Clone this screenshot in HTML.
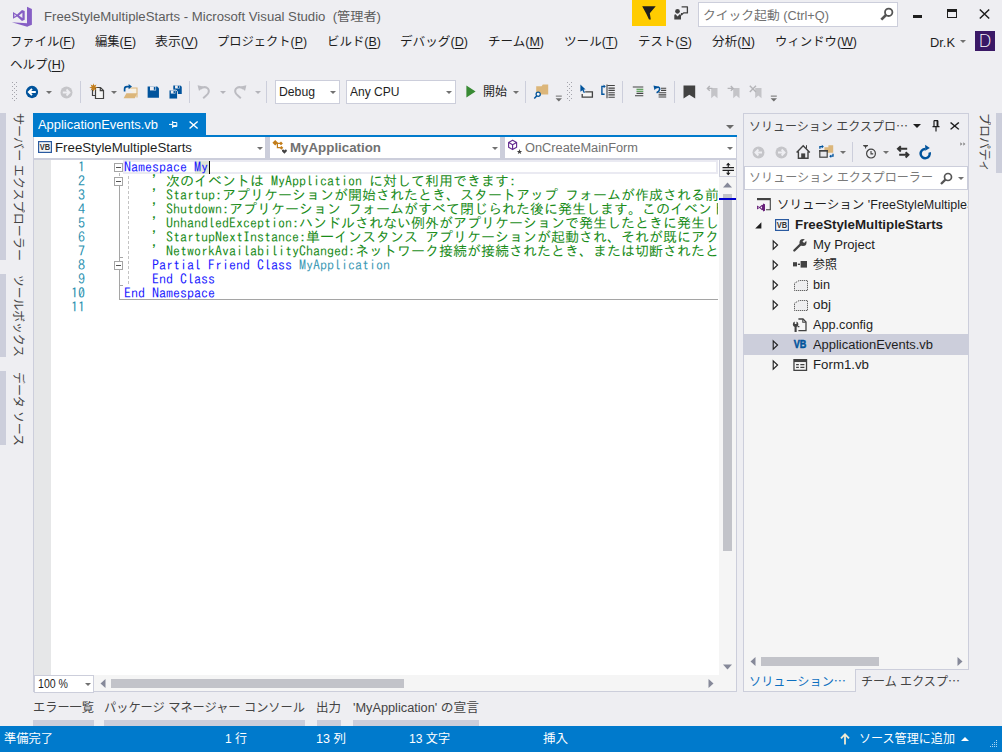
<!DOCTYPE html>
<html lang="ja"><head>
<meta charset="utf-8">
<title>FreeStyleMultipleStarts - Microsoft Visual Studio</title>
<style>
*{box-sizing:border-box;margin:0;padding:0}
html,body{width:1002px;height:752px;overflow:hidden;background:#eeeef2}
body{position:relative;font-family:"Liberation Sans","Noto Sans CJK JP",sans-serif;font-size:12px;color:#1e1e1e}
.a{position:absolute;white-space:nowrap}
svg{position:absolute;overflow:visible}
.t{position:absolute;white-space:nowrap;line-height:20px;height:20px;transform-origin:0 50%}
u{text-decoration:underline;text-underline-offset:2px;text-decoration-thickness:1px}
#title{left:44px;top:7px;font-size:12px;color:#5c5c5c}
.m{font-size:12px;color:#1e1e1e;top:32px}
.code{font-family:"IPAGothic","Liberation Mono",monospace;font-size:14px;line-height:14px;height:14px;position:absolute;white-space:pre;left:5px}
.ln{font-family:"IPAGothic","Liberation Mono",monospace;font-size:14px;line-height:14px;height:14px;position:absolute;width:52px;left:33px;text-align:right;color:#2b91af}
.k{color:#1c1cff}.c{color:#1a8c1a}.ty{color:#3f9bb6}
.se{font-size:12px;color:#1e1e1e}
.sb{color:#fff;font-size:12px;top:729px}
.vt{position:absolute;writing-mode:vertical-rl;text-orientation:sideways;font-size:12px;color:#444;white-space:nowrap;line-height:14px;width:14px;transform-origin:50% 0}
.bar{position:absolute;background:#cccedb}
.dd{position:absolute;width:0;height:0;border-left:3.5px solid transparent;border-right:3.5px solid transparent;border-top:3.5px solid #717171}
.sep{position:absolute;width:1px;background:#cccedb}
.bt{font-size:12px;color:#444;top:698px}
</style>
</head>
<body>
<!-- ===== TITLE BAR ===== -->
<svg style="left:12px;top:7px" width="21" height="20" viewBox="0 0 21 20">
  <path d="M15 -0.2 L19.9 1.9 V17.7 L15 19.8 Z" fill="#865fc5"></path>
  <path d="M-0.2 15.2 L15.2 16.3 V19.8 Z" fill="#865fc5"></path>
  <path d="M1 5 L5.1 7.4 L10 2.9 L12.7 4.1 V12.7 L10 13.9 L5.1 9.4 L1 11.8 Z M2.4 7.1 V9.7 L4.1 8.4 Z M6.9 8.4 L10.4 5.7 V11.1 Z" fill="#865fc5" fill-rule="evenodd"></path>
</svg>
<div class="t" id="title" style="transform: scaleX(1.097);">FreeStyleMultipleStarts - Microsoft Visual Studio &nbsp;(管理者)</div>

<div class="a" style="left:632px;top:0;width:34px;height:26px;background:#ffcc00"></div>
<svg style="left:642px;top:6px" width="15" height="15" viewBox="0 0 15 15"><path d="M0.2 0.3 H13.7 L7.8 7.2 L8.8 13.6 H7 L4.3 7.8 Z" fill="#1e1e1e"></path></svg>
<svg style="left:673px;top:5px" width="17" height="16" viewBox="0 0 17 16">
  <path d="M8.6 1.9 H14.4 V7.9 H10.6 L8.6 9.9 V7.9" fill="#eeeef2" stroke="#424242" stroke-width="1.3" stroke-linejoin="round"></path>
  <circle cx="4.5" cy="6.3" r="2.35" fill="#424242"></circle>
  <path d="M1.3 14.6 V10.6 Q1.3 9.3 2.6 9.3 L4.6 11.6 L6.6 9.3 Q8 9.3 8 10.6 V14.6 Z" fill="#424242"></path>
</svg>
<div class="a" style="left:698px;top:2px;width:200px;height:24.5px;background:#fff;border:1px solid #cccedb"></div>
<div class="t" style="left: 703px; top: 6px; font-size: 12px; color: rgb(113, 113, 113); transform: scaleX(1.0647);">クイック起動 (Ctrl+Q)</div>
<svg style="left:880px;top:7px" width="14" height="14" viewBox="0 0 14 14"><circle cx="8.7" cy="5.3" r="3.7" fill="none" stroke="#555" stroke-width="1.8"></circle><path d="M6 8 L1.3 12.7" stroke="#555" stroke-width="2.6"></path></svg>
<div class="a" style="left:913px;top:15px;width:9px;height:3px;background:#1e1e1e"></div>
<div class="a" style="left:947px;top:9px;width:10px;height:9px;border:1px solid #1e1e1e;border-top-width:3px"></div>
<svg style="left:979px;top:9px" width="11" height="10" viewBox="0 0 11 10"><path d="M0.8 0.5 L10.2 9.5 M10.2 0.5 L0.8 9.5" stroke="#1e1e1e" stroke-width="1.5"></path></svg>

<!-- ===== MENU ===== -->
<div class="t m" style="left: 10px; transform: scaleX(1.0261);">ファイル(<u>F</u>)</div>
<div class="t m" style="left: 95px; transform: scaleX(1.0246);">編集(<u>E</u>)</div>
<div class="t m" style="left: 155px; transform: scaleX(1.0746);">表示(<u>V</u>)</div>
<div class="t m" style="left: 217px; transform: scaleX(1.0225);">プロジェクト(<u>P</u>)</div>
<div class="t m" style="left: 327px; transform: scaleX(1.0381);">ビルド(<u>B</u>)</div>
<div class="t m" style="left: 400px; transform: scaleX(1.0515);">デバッグ(<u>D</u>)</div>
<div class="t m" style="left: 488px; transform: scaleX(1.044);">チーム(<u>M</u>)</div>
<div class="t m" style="left: 564px; transform: scaleX(1.0517);">ツール(<u>T</u>)</div>
<div class="t m" style="left: 638px; transform: scaleX(1.0381);">テスト(<u>S</u>)</div>
<div class="t m" style="left: 712px; transform: scaleX(1.0572);">分析(<u>N</u>)</div>
<div class="t m" style="left: 775px; transform: scaleX(1.0337);">ウィンドウ(<u>W</u>)</div>
<div class="t m" style="left: 10px; top: 55px; transform: scaleX(1.0442);">ヘルプ(<u>H</u>)</div>
<div class="t" style="left: 930px; top: 33px; font-size: 12px; color: rgb(30, 30, 30); transform: scaleX(1.071);">Dr.K</div>
<div class="dd" style="left:960px;top:40px"></div>
<div class="a" style="left:975px;top:31px;width:20px;height:20px;background:#3a1866;color:#fff;font-family:'DejaVu Sans','Liberation Sans',sans-serif;font-weight:200;font-size:17px;line-height:20px;text-align:center">D</div>
<!-- ===== TOOLBAR ===== -->
<svg style="left:12px;top:82px" width="5" height="19" viewBox="0 0 5 19"><defs><pattern id="gp" width="4" height="4" patternUnits="userSpaceOnUse"><rect x="0" y="0" width="1" height="1" fill="#a4a4ac"></rect><rect x="2" y="2" width="1" height="1" fill="#a4a4ac"></rect></pattern></defs><rect width="5" height="19" fill="url(#gp)"></rect></svg>
<!-- back -->
<svg style="left:25px;top:85px" width="14" height="14" viewBox="0 0 14 14"><circle cx="7" cy="7" r="6.15" fill="#00539c"></circle><path d="M10.8 7 H4.2 M7 3.8 L3.8 7 L7 10.2" fill="none" stroke="#fff" stroke-width="1.9"></path></svg>
<div class="dd" style="left:45.5px;top:90.5px"></div>
<svg style="left:60px;top:85.5px" width="13" height="13" viewBox="0 0 13 13"><circle cx="6.5" cy="6.5" r="6" fill="#c5c5c9"></circle><path d="M2.8 6.5 H9.2 M6.5 3.5 L9.5 6.5 L6.5 9.5" fill="none" stroke="#eeeef2" stroke-width="1.8"></path></svg>
<div class="sep" style="left:80px;top:81px;height:22px"></div>
<!-- new project -->
<svg style="left:89px;top:83px" width="16" height="17" viewBox="0 0 16 17">
  <path d="M6.5 4.5 H11.5 L14.5 7.5 V15.5 H6.5 Z M11.3 4.7 V7.7 H14.3" fill="#f5f5f5" stroke="#424242" stroke-width="1.2"></path>
  <path d="M3.5 6.5 V12.5 H6" fill="none" stroke="#424242" stroke-width="1.2"></path>
  <path d="M4.5 0.2 L5.2 2.6 L7.4 1.4 L6.3 3.7 L8.8 4.5 L6.3 5.3 L7.4 7.6 L5.2 6.4 L4.5 8.8 L3.8 6.4 L1.6 7.6 L2.7 5.3 L0.2 4.5 L2.7 3.7 L1.6 1.4 L3.8 2.6 Z" fill="#c27d1a"></path>
</svg>
<div class="dd" style="left:110.5px;top:90.5px"></div>
<!-- open -->
<svg style="left:123px;top:83px" width="16" height="17" viewBox="0 0 16 17">
  <path d="M5.8 5 H14 V14.5" fill="#f7f1e4" stroke="#dcb67a" stroke-width="1.1"></path>
  <path d="M0.6 15.2 L3.4 10.2 H14.4 L11.8 15.2 Z" fill="#dcb67a"></path>
  <path d="M1.6 8.4 V6 Q1.6 3.6 4 3.6 H6.4" fill="none" stroke="#00539c" stroke-width="1.7"></path>
  <path d="M5.6 1 L9 3.6 L5.6 6.2 Z" fill="#00539c"></path>
</svg>
<!-- save -->
<svg style="left:146.7px;top:85.6px" width="12.6" height="12.2" viewBox="0 0 14 14"><path d="M0.5 0.5 H11.5 L13.5 2.5 V13.5 H0.5 Z" fill="#00539c"></path><rect x="3.2" y="0.5" width="7" height="4.6" fill="#eeeef2"></rect><rect x="7.6" y="1.2" width="1.9" height="3.2" fill="#00539c"></rect></svg>
<!-- save all -->
<svg style="left:167.6px;top:84.6px" width="14.8" height="14.4" viewBox="0 0 16 17">
  <path d="M5.5 0.5 H13.8 L15.5 2.2 V10.5 H5.5 Z" fill="#00539c"></path><rect x="7.6" y="0.5" width="5.4" height="3.6" fill="#eeeef2"></rect><rect x="10.8" y="1" width="1.6" height="2.6" fill="#00539c"></rect>
  <path d="M0.5 6 H8.8 L10.5 7.7 V16.5 H0.5 Z" fill="#00539c" stroke="#eeeef2" stroke-width="1"></path><rect x="2.6" y="6.5" width="5.4" height="3.6" fill="#eeeef2"></rect><rect x="5.8" y="7" width="1.6" height="2.6" fill="#00539c"></rect>
</svg>
<div class="sep" style="left:189px;top:81px;height:22px"></div>
<!-- undo / redo disabled -->
<svg style="left:197px;top:84px" width="14" height="15" viewBox="0 0 14 15"><path d="M3.2 4.8 Q8 1.6 11 4.6 Q13.4 8 9.2 11.6 L6.2 14.2" fill="none" stroke="#bcbcc2" stroke-width="2"></path><path d="M0.6 1.2 L6.2 2.4 L2 7 Z" fill="#bcbcc2"></path></svg>
<div class="dd" style="left:219.5px;top:90.5px;border-top-color:#b4b4ba"></div>
<svg style="left:233px;top:84px" width="14" height="15" viewBox="0 0 14 15"><path d="M10.8 4.8 Q6 1.6 3 4.6 Q0.6 8 4.8 11.6 L7.8 14.2" fill="none" stroke="#bcbcc2" stroke-width="2"></path><path d="M13.4 1.2 L7.8 2.4 L12 7 Z" fill="#bcbcc2"></path></svg>
<div class="dd" style="left:254.5px;top:90.5px;border-top-color:#b4b4ba"></div>
<div class="sep" style="left:266px;top:81px;height:22px"></div>
<!-- combos -->
<div class="a" style="left:275px;top:80px;width:65px;height:24px;background:#fff;border:1px solid #cccedb"></div>
<div class="t" style="left: 279px; top: 82px; font-size: 12px; transform: scaleX(1.0177);">Debug</div>
<div class="dd" style="left:329.5px;top:90.5px"></div>
<div class="a" style="left:346px;top:80px;width:110px;height:24px;background:#fff;border:1px solid #cccedb"></div>
<div class="t" style="left: 350px; top: 82px; font-size: 12px; transform: scaleX(1.0028);">Any CPU</div>
<div class="dd" style="left:445.5px;top:90.5px"></div>
<!-- start -->
<svg style="left:466px;top:85px" width="10" height="13" viewBox="0 0 10 13"><path d="M0.4 0.6 L9.6 6.5 L0.4 12.4 Z" fill="#388a34"></path></svg>
<div class="t" style="left: 483px; top: 82px; font-size: 12px; transform: scaleX(0.9993);">開始</div>
<div class="dd" style="left:513px;top:90.5px"></div>
<div class="sep" style="left:525px;top:81px;height:22px"></div>
<!-- find in files -->
<svg style="left:533px;top:83px" width="16" height="17" viewBox="0 0 16 17">
  <path d="M3.2 3.2 H8.6 L9.8 1.6 H15.2 V11.5 H3.2 Z" fill="#dcb67a"></path>
  <circle cx="5.2" cy="11.3" r="2.1" fill="#f5f5f5" stroke="#00539c" stroke-width="1.25"></circle><path d="M3.8 12.8 L1.3 15.4" stroke="#00539c" stroke-width="1.5"></path>
</svg>
<svg style="left:555px;top:95px" width="8" height="8" viewBox="0 0 8 8"><rect x="0.8" y="0.6" width="6" height="1" fill="#6e6e6e"></rect><path d="M0.6 3.2 H7 L3.8 6.6 Z" fill="#6e6e6e"></path></svg>
<svg style="left:567px;top:82px" width="5" height="19" viewBox="0 0 5 19"><rect width="5" height="19" fill="url(#gp)"></rect></svg>
<!-- icon1: cursor + rect -->
<svg style="left:580px;top:84px" width="14" height="15" viewBox="0 0 14 15">
  <path d="M5.2 7.8 H12.4 V13.2 H2.2 V10" fill="#f5f5f5" stroke="#424242" stroke-width="1.3"></path>
  <path d="M0.4 0.6 L5.6 5.4 L3.6 5.6 L5 8.4 L3.8 9 L2.4 6.2 L0.4 7.8 Z" fill="#00539c"></path>
</svg>
<!-- icon2 -->
<svg style="left:601px;top:84px" width="15" height="15" viewBox="0 0 15 15">
  <path d="M3.6 2.4 H0.9 V10.2 H3.6" fill="none" stroke="#00539c" stroke-width="1.4"></path>
  <path d="M2.6 0.6 L4.8 2.4 L2.6 4.2 Z" fill="#00539c"></path>
  <path d="M6 0.6 V14.2" stroke="#424242" stroke-width="1.1"></path>
  <path d="M6.4 1.5 H13.8 M7.4 4.1 H13.8 M7.4 6.4 H13.8 M7.4 8.7 H13.8 M7.4 10.9 H13.8 M7.4 13.2 H13.8" stroke="#424242" stroke-width="1.1"></path>
</svg>
<div class="sep" style="left:622px;top:81px;height:22px"></div>
<svg style="left:632px;top:86px" width="12" height="12" viewBox="0 0 12 12"><path d="M0.8 1 H11.3 M4.5 7.4 H11.3 M3 9.7 H11.3" stroke="#424242" stroke-width="1.1"></path><path d="M4.5 3.2 H11.3 M4.5 5.3 H11.3" stroke="#388a34" stroke-width="1.1"></path></svg>
<svg style="left:653px;top:85px" width="14" height="13" viewBox="0 0 14 13"><path d="M2.6 2.9 Q6.8 0.8 6.7 4.2 Q6.4 6.4 3.6 7.8" fill="none" stroke="#00539c" stroke-width="1.6"></path><path d="M0.5 0.6 L4.6 1.4 L1.5 5.2 Z" fill="#00539c"></path><path d="M8 3.2 H13.2 M8 5.4 H13.2 M5.6 7.7 H13.2 M5.6 9.9 H13.2 M5.6 12 H13.2" stroke="#424242" stroke-width="1.1"></path></svg>
<div class="sep" style="left:674px;top:81px;height:22px"></div>
<!-- bookmarks -->
<svg style="left:683px;top:85px" width="13" height="14" viewBox="0 0 13 14"><path d="M0.5 0.5 H12.2 V13.5 L6.3 9.8 L0.5 13.5 Z" fill="#424242"></path></svg>
<svg style="left:706px;top:85px" width="13" height="14" viewBox="0 0 13 14"><path d="M5.2 3 H11.5 V13.2 L8.3 10.6 L5.2 13.2 Z" fill="#c4c4c8"></path><path d="M6.4 3.4 H1.6 M3.8 1 L1.4 3.4 L3.8 5.8" fill="none" stroke="#b4b4b8" stroke-width="1.4"></path></svg>
<svg style="left:727px;top:85px" width="13" height="14" viewBox="0 0 13 14"><path d="M6.2 3 H12.5 V13.2 L9.3 10.6 L6.2 13.2 Z" fill="#c4c4c8"></path><path d="M0.6 3.4 H6 M3.8 1 L6.2 3.4 L3.8 5.8" fill="none" stroke="#b4b4b8" stroke-width="1.4"></path></svg>
<svg style="left:749px;top:85px" width="13" height="14" viewBox="0 0 13 14"><path d="M6.2 3 H12.5 V13.2 L9.3 10.6 L6.2 13.2 Z" fill="#c4c4c8"></path><path d="M0.8 0.8 L7 7 M7 0.8 L0.8 7" fill="none" stroke="#b4b4b8" stroke-width="1.4"></path></svg>
<svg style="left:770px;top:95px" width="8" height="8" viewBox="0 0 8 8"><rect x="0.8" y="0.6" width="6" height="1" fill="#6e6e6e"></rect><path d="M0.6 3.2 H7 L3.8 6.6 Z" fill="#6e6e6e"></path></svg>
<!-- ===== LEFT SIDEBAR ===== -->
<div class="bar" style="left:0;top:113px;width:6px;height:147px"></div>
<div class="bar" style="left:0;top:274px;width:6px;height:83px"></div>
<div class="bar" style="left:0;top:371px;width:6px;height:74px"></div>
<div class="vt" style="left: 11px; top: 113px; transform: scaleY(1.0078);">サーバー エクスプローラー</div>
<div class="vt" style="left: 11px; top: 275px; transform: scaleY(0.9802);">ツールボックス</div>
<div class="vt" style="left: 11px; top: 372px; transform: scaleY(0.99);">データ ソース</div>

<!-- ===== DOCUMENT TAB ===== -->
<div class="a" style="left:33px;top:113px;width:173px;height:23px;background:#007acc"></div>
<div class="t" style="left: 38px; top: 115px; font-size: 12px; color: rgb(255, 255, 255); transform: scaleX(1.0771);">ApplicationEvents.vb</div>
<svg style="left:169px;top:121px" width="9" height="7" viewBox="0 0 9 7"><path d="M0 3.4 H3.6 M3.7 0 V7 M3.7 1.5 H7.8 V5.5 H3.7 M3.7 4.7 H7.8" fill="none" stroke="#fff" stroke-width="1"></path></svg>
<svg style="left:188.9px;top:121px" width="9.2" height="8" viewBox="0 0 10 10" preserveAspectRatio="none"><path d="M0.6 0.6 L9.4 9.4 M9.4 0.6 L0.6 9.4" stroke="#fff" stroke-width="1.45"></path></svg>
<div class="dd" style="left:726px;top:124.5px;border-left-width:4.2px;border-right-width:4.2px;border-top:4.5px solid #6a6a6a"></div>
<div class="a" style="left:33px;top:135px;width:704px;height:2px;background:#007acc"></div>

<!-- nav bar -->
<div class="a" style="left:33px;top:137px;width:704px;height:23px;background:#cccedb"></div>
<div class="a" style="left:34px;top:137px;width:231px;height:21px;background:#fff"></div>
<div class="a" style="left:270px;top:137px;width:229.5px;height:21px;background:#fff"></div>
<div class="a" style="left:505px;top:137px;width:230.5px;height:21px;background:#fff"></div>
<!-- VB project icon -->
<svg style="left:38px;top:141px" width="14" height="12" viewBox="0 0 14 12"><rect x="0.6" y="0.6" width="12.8" height="10.8" fill="#f5f5f5" stroke="#2a5aa0" stroke-width="1.2"></rect><text x="7" y="9.2" font-family="Liberation Sans,sans-serif" font-size="8.6" font-weight="bold" text-anchor="middle" fill="#333" textLength="10.4" lengthAdjust="spacingAndGlyphs">VB</text></svg>
<div class="t" style="left: 55px; top: 138px; font-size: 12px; color: rgb(30, 30, 30); transform: scaleX(1.1044);">FreeStyleMultipleStarts</div>
<div class="dd" style="left:256.5px;top:146.5px"></div>
<!-- class icon -->
<svg style="left:272px;top:140px" width="16" height="15" viewBox="0 0 16 15"><path d="M0.4 2.8 L3.2 0 L6 2.8 L3.2 5.6 Z M7.1 3.4 L9 1.5 L10.9 3.4 L9 5.3 Z M7.5 7.8 L9.4 5.9 L11.3 7.8 L9.4 9.7 Z" fill="#c27d1a"></path><path d="M5 3.4 H8 M5.4 3.4 V7.6 H8" fill="none" stroke="#c27d1a" stroke-width="1.2"></path><path d="M12.4 13.8 L10 11.2 Q9.5 9.6 11 9.4 Q12 9.4 12.4 10.4 Q12.8 9.4 13.8 9.4 Q15.3 9.6 14.8 11.2 Z" fill="#424242"></path></svg>
<div class="t" style="left: 290px; top: 138px; font-size: 12px; font-weight: bold; color: rgb(113, 113, 113); transform: scaleX(1.1095);">MyApplication</div>
<div class="dd" style="left:491.5px;top:146.5px"></div>
<!-- method icon -->
<svg style="left:507px;top:139px" width="16" height="16" viewBox="0 0 16 16"><path d="M5.6 1.2 L9.6 3.4 V8.3 L5.6 10.6 L1.6 8.3 V3.4 Z M1.7 3.5 L5.6 5.8 L9.5 3.5 M5.6 5.8 V10.4" fill="none" stroke="#652d90" stroke-width="1.15" stroke-linejoin="round"></path><path d="M12.5 10 L13.2 11.9 L15.2 12 L13.6 13.2 L14.2 15.1 L12.5 14 L10.8 15.1 L11.4 13.2 L9.8 12 L11.8 11.9 Z" fill="#424242"></path></svg>
<div class="t" style="left: 525px; top: 138px; font-size: 12px; color: rgb(113, 113, 113); transform: scaleX(1.0657);">OnCreateMainForm</div>
<div class="dd" style="left:726.5px;top:146.5px"></div>

<!-- ===== EDITOR ===== -->
<div class="a" style="left:33px;top:160px;width:704px;height:532px;background:#f5f5f5;border-right:1px solid #cccedb;border-bottom:1px solid #cccedb;border-left:1px solid #cccedb"></div>
<div class="a" style="left:34px;top:160px;width:17px;height:515px;background:#e6e7e8"></div>
<div class="a" style="left:51px;top:160px;width:668px;height:515px;background:#fff"></div>
<!-- current line highlight -->
<div class="a" style="left:123px;top:160px;width:595px;height:14px;border:2px solid #eaeaf2"></div>
<!-- line numbers -->
<div class="ln" style="top:160px">1</div>
<div class="ln" style="top:174px">2</div>
<div class="ln" style="top:188px">3</div>
<div class="ln" style="top:202px">4</div>
<div class="ln" style="top:216px">5</div>
<div class="ln" style="top:230px">6</div>
<div class="ln" style="top:244px">7</div>
<div class="ln" style="top:258px">8</div>
<div class="ln" style="top:272px">9</div>
<div class="ln" style="top:286px">10</div>
<div class="ln" style="top:300px">11</div>
<!-- outlining -->
<svg style="left:113px;top:160px" width="20" height="142" viewBox="0 0 20 142" shape-rendering="crispEdges">
  <path d="M6.5 26 V139.5" stroke="#a5a5a5" stroke-width="1" fill="none"></path><path d="M6.5 13 V16" stroke="#b8b8b8" stroke-width="1" fill="none"></path>
  <path d="M6.5 97.5 H9.5 M6.5 125.5 H9.5" stroke="#a5a5a5" stroke-width="1" fill="none"></path>
  <path d="M15.5 16 V126" stroke="#c4c4c4" stroke-width="1" stroke-dasharray="3 2" fill="none"></path>
  <g fill="#fff" stroke="#a5a5a5" stroke-width="1"><rect x="1.5" y="3.5" width="8" height="8"></rect><rect x="1.5" y="17.5" width="8" height="8"></rect><rect x="1.5" y="101.5" width="8" height="8"></rect></g>
  <path d="M3 7.5 H8 M3 21.5 H8 M3 105.5 H8" stroke="#555" stroke-width="1"></path>
</svg>
<div class="a" style="left:119px;top:299px;width:599px;height:1px;background:#a5a5a5"></div>
<!-- code -->
<div class="a" style="left:119px;top:160px;width:599px;height:160px;overflow:hidden">
<div class="a" style="left:76px;top:1px;width:14px;height:13px;background:#dfe6d8"></div>
<div class="a" style="left:90px;top:1px;width:1.4px;height:13px;background:#000"></div>
<div class="code" style="top:0px"><span class="k">Namespace My</span></div>
<div class="code c" style="top:14px">    ' 次のイベントは MyApplication に対して利用できます:</div>
<div class="code c" style="top:28px">    ' Startup:アプリケーションが開始されたとき、スタートアップ フォームが作成される前に発生します。</div>
<div class="code c" style="top:42px">    ' Shutdown:アプリケーション フォームがすべて閉じられた後に発生します。このイベントは、アプリケーションが異常終了したときには発生しません。</div>
<div class="code c" style="top:56px">    ' UnhandledException:ハンドルされない例外がアプリケーションで発生したときに発生します。</div>
<div class="code c" style="top:70px">    ' StartupNextInstance:単一インスタンス アプリケーションが起動され、それが既にアクティブであるときに発生します。</div>
<div class="code c" style="top:84px">    ' NetworkAvailabilityChanged:ネットワーク接続が接続されたとき、または切断されたときに発生します。</div>
<div class="code k" style="top:98px">    Partial Friend Class <span class="ty">MyApplication</span></div>
<div class="code k" style="top:112px">    End Class</div>
<div class="code k" style="top:126px">End Namespace</div>
</div>
<!-- split handle -->
<div class="a" style="left:719px;top:160px;width:17px;height:17px;background:#f5f5f5;border-left:1px solid #cccedb;border-bottom:1px solid #cccedb"></div>
<svg style="left:721.5px;top:161.5px" width="12.5" height="14" viewBox="0 0 12 13"><path d="M0.5 5.2 H11.5 M0.5 7.8 H11.5 M6 1 V5 M6 8 V12" stroke="#1e1e1e" stroke-width="1.1" fill="none"></path><path d="M3.8 3 L6 0.4 L8.2 3 Z M3.8 10 L6 12.6 L8.2 10 Z" fill="#1e1e1e"></path></svg>
<!-- v scrollbar -->
<svg style="left:723px;top:182px" width="9" height="6" viewBox="0 0 9 6"><path d="M0 5.5 L4.5 0.5 L9 5.5 Z" fill="#868999"></path></svg>
<div class="a" style="left:723px;top:194px;width:9px;height:357px;background:#c2c3c9"></div>
<div class="a" style="left:719px;top:198px;width:17px;height:2px;background:#0000cd"></div>
<svg style="left:723px;top:664px" width="9" height="6" viewBox="0 0 9 6"><path d="M0 0.5 L4.5 5.5 L9 0.5 Z" fill="#868999"></path></svg>
<!-- bottom scrollbar + zoom -->
<div class="a" style="left:33.5px;top:675px;width:60.5px;height:17.5px;background:#fff;border:1.5px solid #cccedb"></div>
<div class="t" style="left: 38px; top: 674px; font-size: 12px; color: rgb(30, 30, 30); transform: scaleX(0.8815);">100 %</div>
<div class="dd" style="left:84.5px;top:682.5px"></div>
<svg style="left:99.5px;top:679px" width="6" height="9" viewBox="0 0 6 9"><path d="M5.5 0 L0.5 4.5 L5.5 9 Z" fill="#868999"></path></svg>
<div class="a" style="left:111px;top:679px;width:293px;height:9px;background:#c2c3c9"></div>
<svg style="left:708px;top:679px" width="6" height="9" viewBox="0 0 6 9"><path d="M0.5 0 L5.5 4.5 L0.5 9 Z" fill="#868999"></path></svg>

<!-- bottom tool tabs -->
<div class="t bt" style="left: 33px; transform: scaleX(1.0164);">エラー一覧</div>
<div class="t bt" style="left: 104px; transform: scaleX(1.0172);">パッケージ マネージャー コンソール</div>
<div class="t bt" style="left: 316px; transform: scaleX(1.041);">出力</div>
<div class="t bt" style="left: 353px; transform: scaleX(1.0622);">'MyApplication' の宣言</div>
<div class="bar" style="left:33px;top:720px;width:61px;height:7px"></div>
<div class="bar" style="left:104px;top:720px;width:201px;height:7px"></div>
<div class="bar" style="left:317px;top:720px;width:24px;height:7px"></div>
<div class="bar" style="left:353px;top:720px;width:126px;height:7px"></div>
<!-- ===== SOLUTION EXPLORER ===== -->
<div class="a" style="left:743px;top:113px;width:226px;height:557px;background:#f5f5f5;border:1px solid #cccedb"></div>
<div class="a" style="left:744px;top:114px;width:224px;height:24px;background:#eeeef2"></div>
<div class="t" style="left: 749px; top: 116px; font-size: 12px; color: rgb(68, 68, 68); transform: scaleX(1.0015);">ソリューション エクスプロ<span style="font-family:'Noto Sans CJK JP',sans-serif">…</span></div>
<div class="dd" style="left:912.8px;top:123.8px;border-left-width:4.05px;border-right-width:4.05px;border-top:4.2px solid #1e1e1e"></div>
<svg style="left:931.5px;top:120px" width="8" height="12" viewBox="0 0 8 12"><path d="M2 0.6 H6 M2 0.6 V6.6 M0.5 6.6 H7.5 M4 6.6 V11.4" fill="none" stroke="#1e1e1e" stroke-width="1.2"></path><path d="M5.5 0.6 V6.6" stroke="#1e1e1e" stroke-width="1.9"></path></svg>
<svg style="left:950.4px;top:122px" width="9.4" height="7.9" viewBox="0 0 10 10" preserveAspectRatio="none"><path d="M0.6 0.6 L9.4 9.4 M9.4 0.6 L0.6 9.4" stroke="#1e1e1e" stroke-width="1.6"></path></svg>
<!-- SE toolbar -->
<div class="a" style="left:744px;top:138px;width:224px;height:28px;background:#eeeef2"></div>
<svg style="left:752px;top:146px" width="13" height="13" viewBox="0 0 13 13"><circle cx="6.5" cy="6.5" r="6" fill="#c5c5c9"></circle><path d="M10 6.5 H3.6 M6.4 3.5 L3.4 6.5 L6.4 9.5" fill="none" stroke="#eeeef2" stroke-width="1.8"></path></svg>
<svg style="left:775px;top:146px" width="13" height="13" viewBox="0 0 13 13"><circle cx="6.5" cy="6.5" r="6" fill="#c5c5c9"></circle><path d="M3 6.5 H9.4 M6.6 3.5 L9.6 6.5 L6.6 9.5" fill="none" stroke="#eeeef2" stroke-width="1.8"></path></svg>
<svg style="left:796px;top:144px" width="15" height="16" viewBox="0 0 15 16"><path d="M0.6 8.6 L7.2 1.8 L13.8 8.6 M2.4 7.4 V14.2 H12 V7.4" fill="none" stroke="#424242" stroke-width="1.4"></path><rect x="5.2" y="9.4" width="4" height="5" fill="#424242"></rect><path d="M10.5 1.2 V4.6" stroke="#424242" stroke-width="1"></path></svg>
<svg style="left:818px;top:144px" width="16" height="16" viewBox="0 0 16 16"><path d="M6.4 3.2 H10.4 V1.2 H15.2 V8.8 H6.4 Z" fill="#dcb67a"></path><rect x="1.8" y="6.6" width="7.4" height="6.6" fill="#e8e8ec" stroke="#424242" stroke-width="1.2"></rect><rect x="1.2" y="6" width="8.6" height="1.6" fill="#424242"></rect><path d="M1.9 4.8 V2.6 H4.2" fill="none" stroke="#00539c" stroke-width="1.3"></path><path d="M3.8 0.8 L5.8 2.6 L3.8 4.4 Z" fill="#00539c"></path><path d="M15 9.8 V12.2 H12.8" fill="none" stroke="#00539c" stroke-width="1.3"></path><path d="M13.2 10.4 L11.2 12.2 L13.2 14 Z" fill="#00539c"></path></svg>
<div class="dd" style="left:840px;top:150.5px"></div>
<div class="sep" style="left:852px;top:142px;height:20px"></div>
<svg style="left:862px;top:144px" width="15" height="16" viewBox="0 0 15 16"><circle cx="9" cy="9.6" r="4.4" fill="none" stroke="#424242" stroke-width="1.2"></circle><path d="M9 7 V9.9 H11.2" fill="none" stroke="#424242" stroke-width="1.1"></path><path d="M1.2 1 H6 V1.9 L4.1 3.1 V4.5 H3.1 V3.1 L1.2 1.9 Z" fill="#424242"></path></svg>
<div class="dd" style="left:882.5px;top:150.5px"></div>
<svg style="left:897px;top:146px" width="13" height="13" viewBox="0 0 13 13"><path d="M1.4 2.8 H10.2 M3.8 0.2 L1 2.8 L3.8 5.4 M11 8.8 H2.2 M8.6 6.2 L11.4 8.8 L8.6 11.4" fill="none" stroke="#333" stroke-width="2"></path></svg>
<svg style="left:918px;top:144px" width="14" height="16" viewBox="0 0 14 16"><path d="M11.64 8.4 A4.6 4.6 0 1 1 7.2 5" fill="none" stroke="#00539c" stroke-width="2.5"></path><path d="M7.2 0.8 L11.8 3.9 L7.2 6.8 Z" fill="#00539c"></path></svg>
<svg style="left:960px;top:142px" width="6" height="4" viewBox="0 0 6 4"><path d="M0.3 0.2 L2.4 2 L0.3 3.8 Z M3.3 0.2 L5.4 2 L3.3 3.8 Z" fill="#868686"></path></svg>
<!-- search -->
<div class="a" style="left:744px;top:166px;width:224px;height:24px;background:#fff;border:1px solid #cccedb"></div>
<div class="t" style="left: 749px; top: 168px; font-size: 12px; color: rgb(122, 122, 122); transform: scaleX(1.0068);">ソリューション エクスプローラー</div>
<svg style="left:940px;top:172px" width="13" height="13" viewBox="0 0 13 13"><circle cx="8" cy="5" r="3.5" fill="none" stroke="#555" stroke-width="1.7"></circle><path d="M5.4 7.6 L1 12" stroke="#555" stroke-width="2.3"></path></svg>
<div class="dd" style="left:957.5px;top:177px"></div>
<!-- tree -->
<div class="a" style="left:744px;top:334px;width:224px;height:21px;background:#cccedb"></div>
<svg style="left:757px;top:198px" width="14" height="14" viewBox="0 0 14 14"><rect x="0" y="0" width="13.8" height="2.2" fill="#424242"></rect><path d="M13.3 2 V11.7 H9" fill="none" stroke="#424242" stroke-width="1.1"></path><path d="M6 5.4 L8 6.2 V12.8 L6 13.6 Z" fill="#68217a"></path><path d="M0 7.4 L2.5 9 L5 6.7 L6.1 7.1 V11.9 L5 12.3 L2.5 10 L0 11.6 Z M0.9 8.8 V10.2 L1.8 9.5 Z M3.4 9.5 L5 8.2 V10.8 Z" fill="#68217a" fill-rule="evenodd"></path></svg>
<div class="a" style="left:777px;top:194px;width:191px;height:20px;overflow:hidden"><div class="t se" style="left: 0px; top: 1px; font-size: 12px; transform: scaleX(1.0434);">ソリューション 'FreeStyleMultipleStarts' (1 プロジェクト)</div></div>
<svg style="left:754.8px;top:221.6px" width="6.6" height="6.6" viewBox="0 0 7 7"><path d="M6.8 0.2 V6.8 H0.2 Z" fill="#1e1e1e"></path></svg>
<svg style="left:775px;top:219px" width="14" height="12" viewBox="0 0 14 12"><rect x="0.6" y="0.6" width="12.8" height="10.8" fill="#f5f5f5" stroke="#2a5aa0" stroke-width="1.2"></rect><text x="7" y="9.2" font-family="Liberation Sans,sans-serif" font-size="8.6" font-weight="bold" text-anchor="middle" fill="#333" textLength="10.4" lengthAdjust="spacingAndGlyphs">VB</text></svg>
<div class="t se" style="left: 795px; top: 215px; font-weight: bold; font-size: 12px; transform: scaleX(1.1097);">FreeStyleMultipleStarts</div>
<!-- My Project -->
<svg class="ex" style="left:772px;top:240px" width="7" height="10" viewBox="0 0 7 10"><path d="M1.2 0.8 L5.6 5 L1.2 9.2 Z" fill="none" stroke="#1e1e1e" stroke-width="1.1"></path></svg>
<svg style="left:792px;top:237px" width="16" height="15" viewBox="0 0 16 15"><path d="M2.3 13.5 L9.6 6.4" stroke="#424242" stroke-width="2.3" stroke-linecap="round"></path><circle cx="11" cy="5.5" r="3.5" fill="#424242"></circle><path d="M11.3 5.2 L14.8 1.7" stroke="#f5f5f5" stroke-width="2.3"></path></svg>
<div class="t se" style="left: 813px; top: 235px; font-size: 12px; transform: scaleX(1.0937);">My Project</div>
<!-- 参照 -->
<svg class="ex" style="left:772px;top:260px" width="7" height="10" viewBox="0 0 7 10"><path d="M1.2 0.8 L5.6 5 L1.2 9.2 Z" fill="none" stroke="#1e1e1e" stroke-width="1.1"></path></svg>
<svg style="left:793px;top:261px" width="14" height="7" viewBox="0 0 14 7"><rect x="0" y="1.2" width="4" height="4.2" fill="#424242"></rect><rect x="4.8" y="2.6" width="2.2" height="1.4" fill="#424242"></rect><rect x="7.6" y="0" width="6.4" height="6.6" fill="#424242"></rect></svg>
<div class="t se" style="left: 813px; top: 255px; font-size: 12px; transform: scaleX(0.9993);">参照</div>
<!-- bin -->
<svg class="ex" style="left:772px;top:280px" width="7" height="10" viewBox="0 0 7 10"><path d="M1.2 0.8 L5.6 5 L1.2 9.2 Z" fill="none" stroke="#1e1e1e" stroke-width="1.1"></path></svg>
<svg style="left:793.5px;top:279.8px" width="14" height="11" viewBox="0 0 14 11"><path d="M0.5 3.2 L5.2 0.5 H13.5 V10.5 H0.5 Z" fill="#efeff0" stroke="#3c3c3c" stroke-width="1" stroke-dasharray="1 1"></path></svg>
<div class="t se" style="left: 813px; top: 275px; font-size: 12px; transform: scaleX(1.0615);">bin</div>
<!-- obj -->
<svg class="ex" style="left:772px;top:300px" width="7" height="10" viewBox="0 0 7 10"><path d="M1.2 0.8 L5.6 5 L1.2 9.2 Z" fill="none" stroke="#1e1e1e" stroke-width="1.1"></path></svg>
<svg style="left:793.5px;top:299.8px" width="14" height="11" viewBox="0 0 14 11"><path d="M0.5 3.2 L5.2 0.5 H13.5 V10.5 H0.5 Z" fill="#efeff0" stroke="#3c3c3c" stroke-width="1" stroke-dasharray="1 1"></path></svg>
<div class="t se" style="left: 813px; top: 295px; font-size: 12px; transform: scaleX(1.1239);">obj</div>
<!-- App.config -->
<svg style="left:792px;top:317px" width="15" height="16" viewBox="0 0 15 16"><path d="M6.4 2 H11 L14 5 V13.6 H6.4" fill="#f5f5f5" stroke="#424242" stroke-width="1.3"></path><path d="M10.8 2.2 V5.2 H13.8" fill="none" stroke="#424242" stroke-width="1.1"></path><circle cx="3.6" cy="7.2" r="2.7" fill="#424242"></circle><path d="M3.6 7 V3.6" stroke="#f5f5f5" stroke-width="1.7"></path><path d="M3.6 8.6 V15" stroke="#424242" stroke-width="2.1"></path><path d="M5.6 9.6 H7.4" stroke="#424242" stroke-width="1.3"></path></svg>
<div class="t se" style="left: 813px; top: 315px; font-size: 12px; transform: scaleX(1.0579);">App.config</div>
<!-- ApplicationEvents.vb -->
<svg class="ex" style="left:772px;top:340px" width="7" height="10" viewBox="0 0 7 10"><path d="M1.2 0.8 L5.6 5 L1.2 9.2 Z" fill="none" stroke="#1e1e1e" stroke-width="1.1"></path></svg>
<svg style="left:793px;top:339px" width="14" height="11" viewBox="0 0 14 11"><text x="7" y="9.4" font-family="Liberation Sans,sans-serif" font-size="10.5" font-weight="bold" text-anchor="middle" fill="#00539c" stroke="#00539c" stroke-width="0.5" textLength="12.6" lengthAdjust="spacingAndGlyphs">VB</text></svg>
<div class="t se" style="left: 813px; top: 335px; font-size: 12px; transform: scaleX(1.0771);">ApplicationEvents.vb</div>
<!-- Form1.vb -->
<svg class="ex" style="left:772px;top:360px" width="7" height="10" viewBox="0 0 7 10"><path d="M1.2 0.8 L5.6 5 L1.2 9.2 Z" fill="none" stroke="#1e1e1e" stroke-width="1.1"></path></svg>
<svg style="left:792.5px;top:359px" width="14.5" height="12" viewBox="0 0 15 13"><rect x="0.7" y="0.7" width="13.6" height="11.6" fill="#f5f5f5" stroke="#424242" stroke-width="1.4"></rect><rect x="0.7" y="0.7" width="13.6" height="2.6" fill="#424242"></rect><path d="M3 6 H6 M7.6 6 H12 M3 9 H6 M7.6 9 H12" stroke="#424242" stroke-width="1.4"></path></svg>
<div class="t se" style="left: 813px; top: 355px; font-size: 12px; transform: scaleX(1.1048);">Form1.vb</div>
<!-- SE scrollbar -->
<svg style="left:750px;top:657px" width="6" height="9" viewBox="0 0 6 9"><path d="M5.5 0 L0.5 4.5 L5.5 9 Z" fill="#868999"></path></svg>
<div class="a" style="left:761px;top:657px;width:118px;height:9px;background:#c2c3c9"></div>
<svg style="left:957px;top:657px" width="6" height="9" viewBox="0 0 6 9"><path d="M0.5 0 L5.5 4.5 L0.5 9 Z" fill="#868999"></path></svg>
<!-- SE bottom tabs -->
<div class="a" style="left:743px;top:669px;width:113px;height:23px;background:#f5f5f5;border:1px solid #cccedb;border-top:0"></div>
<div class="t" style="left: 749px; top: 671px; font-size: 12px; color: rgb(14, 112, 192); transform: scaleX(1.0127);">ソリューション<span style="font-family:'Noto Sans CJK JP',sans-serif">…</span></div>
<div class="t" style="left: 861px; top: 671px; font-size: 12px; color: rgb(68, 68, 68); transform: scaleX(1.0036);">チーム エクスプ<span style="font-family:'Noto Sans CJK JP',sans-serif">…</span></div>

<!-- ===== RIGHT SIDEBAR ===== -->
<div class="bar" style="left:996px;top:113px;width:6px;height:59.5px"></div>
<div class="vt" style="left: 977px; top: 113px; transform: scaleY(0.9953);">プロパティ</div>

<!-- ===== STATUS BAR ===== -->
<div class="a" style="left:0;top:726px;width:1002px;height:26px;background:#007acc"></div>
<div class="t sb" style="left: 4px; transform: scaleX(1.0205);">準備完了</div>
<div class="t sb" style="left: 225px; transform: scaleX(0.9993);">1 行</div>
<div class="t sb" style="left: 316px; transform: scaleX(1.0458);">13 列</div>
<div class="t sb" style="left: 409px; transform: scaleX(1.0077);">13 文字</div>
<div class="t sb" style="left: 543px; transform: scaleX(1.041);">挿入</div>
<div class="t sb" style="left: 859px; transform: scaleX(1.0062);">ソース管理に追加</div>
<svg style="left:840px;top:733px" width="10" height="12" viewBox="0 0 10 12"><path d="M5 1.4 V11.6 M1 5.4 L5 1.2 L9 5.4" fill="none" stroke="#f1ead2" stroke-width="1.8"></path></svg>
<div class="a" style="left:961px;top:737px;width:0;height:0;border-left:4.7px solid transparent;border-right:4.7px solid transparent;border-bottom:4px solid #fff"></div>
<svg style="left:989px;top:739px" width="10" height="10" viewBox="0 0 10 10" shape-rendering="crispEdges"><g fill="#a9d5f2"><rect x="7" y="1" width="1" height="1"></rect><rect x="5" y="3" width="1" height="1"></rect><rect x="7" y="3" width="1" height="1"></rect><rect x="3" y="5" width="1" height="1"></rect><rect x="5" y="5" width="1" height="1"></rect><rect x="7" y="5" width="1" height="1"></rect><rect x="1" y="7" width="1" height="1"></rect><rect x="3" y="7" width="1" height="1"></rect><rect x="5" y="7" width="1" height="1"></rect><rect x="7" y="7" width="1" height="1"></rect></g></svg>


</body></html>
